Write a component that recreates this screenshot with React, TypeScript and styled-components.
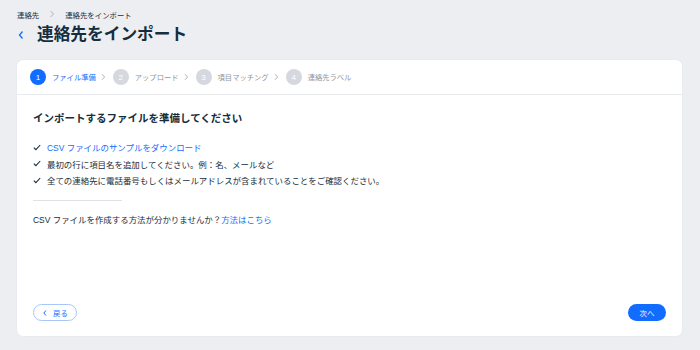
import styled, { createGlobalStyle } from 'styled-components';

const GlobalStyle = createGlobalStyle`
  html, body {
    margin: 0;
    padding: 0;
    background: #eceef2;
    font-family: "Liberation Sans", "Noto Sans CJK JP", sans-serif;
    color: #162d3d;
  }
`;

const steps = ['ファイル準備', 'アップロード', '項目マッチング', '連絡先ラベル'];

const checks = [
  { text: 'CSV ファイルのサンプルをダウンロード', link: true },
  { text: '最初の行に項目名を追加してください。例：名、メールなど', link: false },
  { text: '全ての連絡先に電話番号もしくはメールアドレスが含まれていることをご確認ください。', link: false },
];

export default function App() {
  return (
    <>
      <GlobalStyle />
      <Page>
        <Header>
          <Breadcrumbs>
            <span>連絡先</span>
            <Crumb>
              <svg width="6" height="8" viewBox="0 0 6 8">
                <path d="M1.5 1l3 3-3 3" fill="none" stroke="#a5abb3" strokeWidth="0.9" />
              </svg>
            </Crumb>
            <span>連絡先をインポート</span>
          </Breadcrumbs>
          <TitleRow>
            <BackArrow>
              <svg width="8" height="10" viewBox="0 0 8 10">
                <path d="M5.5 1.5L2.5 5l3 3.5" fill="none" stroke="#116dff" strokeWidth="1.3" />
              </svg>
            </BackArrow>
            <Title>連絡先をインポート</Title>
          </TitleRow>
        </Header>

        <Card>
          <Stepper>
            {steps.map((s, i) => (
              <Step key={s}>
                <StepNum $active={i === 0}>{i + 1}</StepNum>
                <StepLabel $active={i === 0}>{s}</StepLabel>
                {i < steps.length - 1 && (
                  <svg width="5" height="8" viewBox="0 0 5 8">
                    <path d="M1 1.2l2.6 2.8L1 6.8" fill="none" stroke="#a5abb3" strokeWidth="0.9" />
                  </svg>
                )}
              </Step>
            ))}
          </Stepper>

          <Content>
            <Heading>インポートするファイルを準備してください</Heading>
            <CheckList>
              {checks.map((c) => (
                <CheckItem key={c.text}>
                  <svg width="8" height="7" viewBox="0 0 8 7">
                    <path d="M0.8 3.6l2.1 2.1L7.2 1" fill="none" stroke="#162d3d" strokeWidth="1.1" />
                  </svg>
                  {c.link ? <Link>{c.text}</Link> : <span>{c.text}</span>}
                </CheckItem>
              ))}
            </CheckList>
            <Rule />
            <Help>
              CSV ファイルを作成する方法が分かりませんか？<Link>方法はこちら</Link>
            </Help>
          </Content>

          <Footer>
            <GhostButton>
              <svg width="6" height="8" viewBox="0 0 6 8">
                <path d="M4 1.5L1.8 4 4 6.5" fill="none" stroke="#116dff" strokeWidth="1" />
              </svg>
              戻る
            </GhostButton>
            <PrimaryButton>次へ</PrimaryButton>
          </Footer>
        </Card>
      </Page>
    </>
  );
}

const Page = styled.div`
  width: 700px;
  height: 350px;
  box-sizing: border-box;
  padding: 0 18px 14px 17px;
  display: flex;
  flex-direction: column;
`;

const Header = styled.div`
  display: flex;
  flex-direction: column;
`;

const Breadcrumbs = styled.div`
  display: flex;
  align-items: center;
  gap: 8px;
  height: 14px;
  margin-top: 7px;
  font-size: 7.4px;
  color: #162d3d;
`;

const Crumb = styled.span`
  display: flex;
  align-items: center;
  padding: 0 2px;
`;

const TitleRow = styled.div`
  display: flex;
  align-items: center;
  height: 24px;
`;

const BackArrow = styled.span`
  display: flex;
  align-items: center;
  width: 20px;
  margin-top: 3px;
`;

const Title = styled.h1`
  margin: 0;
  font-size: 16.7px;
  font-weight: 700;
  color: #162d3d;
`;

const Card = styled.div`
  margin-top: 15px;
  flex: 1;
  background: #fff;
  border-radius: 6px;
  display: flex;
  flex-direction: column;
  box-shadow: 0 0 2px rgba(22, 45, 61, 0.06);
`;

const Stepper = styled.div`
  height: 35px;
  box-sizing: border-box;
  border-bottom: 1px solid #e8eaee;
  display: flex;
  align-items: center;
  padding-left: 13px;
  gap: 7px;
`;

const Step = styled.div`
  display: flex;
  align-items: center;
  gap: 5px;
`;

const StepNum = styled.span<{ $active: boolean }>`
  width: 16px;
  height: 16px;
  border-radius: 50%;
  background: ${(p) => (p.$active ? '#116dff' : '#d5d8de')};
  color: #fff;
  font-size: 8px;
  display: flex;
  align-items: center;
  justify-content: center;
  margin-right: 1px;
`;

const StepLabel = styled.span<{ $active: boolean }>`
  font-size: 7.3px;
  color: ${(p) => (p.$active ? '#116dff' : '#8f969e')};
`;

const Content = styled.div`
  flex: 1;
  padding: 16px 16px 0;
  display: flex;
  flex-direction: column;
  align-items: flex-start;
`;

const Heading = styled.h2`
  margin: 0;
  font-size: 10.5px;
  font-weight: 700;
  line-height: 14px;
  color: #162d3d;
`;

const CheckList = styled.ul`
  list-style: none;
  margin: 14px 0 0;
  padding: 0;
  display: flex;
  flex-direction: column;
`;

const CheckItem = styled.li`
  display: flex;
  align-items: center;
  gap: 6px;
  height: 16.5px;
  font-size: 8.45px;
  color: #162d3d;
`;

const Link = styled.a`
  color: #116dff;
  cursor: pointer;
`;

const Rule = styled.div`
  width: 89px;
  height: 1px;
  background: #dfe2e6;
  margin-top: 11px;
`;

const Help = styled.p`
  margin: 12px 0 0;
  font-size: 8.45px;
  line-height: 14px;
  color: #162d3d;
`;

const Footer = styled.div`
  display: flex;
  justify-content: space-between;
  align-items: center;
  padding: 0 16px 15px;
`;

const GhostButton = styled.button`
  height: 17px;
  width: 44px;
  box-sizing: border-box;
  border: 1px solid #a8c6f7;
  border-radius: 9px;
  background: #fff;
  color: #116dff;
  font-family: inherit;
  font-size: 7.4px;
  display: flex;
  align-items: center;
  justify-content: center;
  gap: 5px;
  padding: 0;
  cursor: pointer;
`;

const PrimaryButton = styled.button`
  height: 17px;
  width: 38px;
  border: none;
  border-radius: 9px;
  background: #116dff;
  color: #fff;
  font-family: inherit;
  font-size: 7.4px;
  padding: 0;
  cursor: pointer;
`;
